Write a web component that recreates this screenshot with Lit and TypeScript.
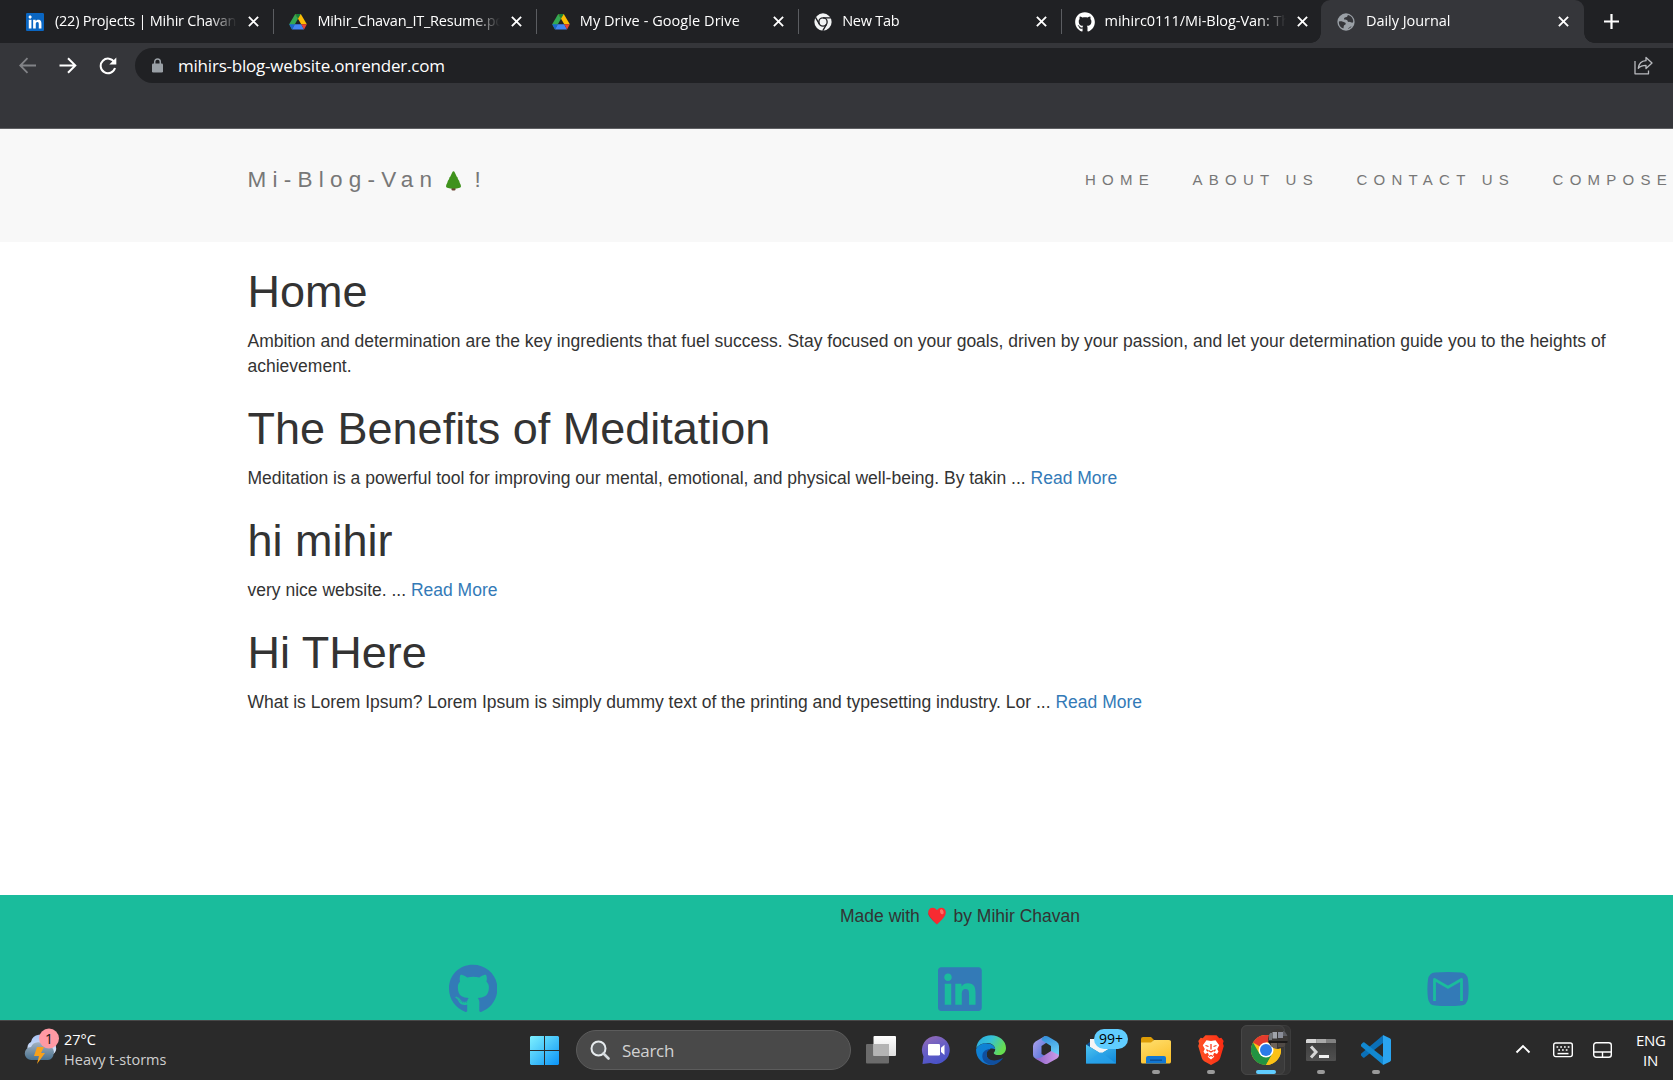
import { LitElement, html, css, TemplateResult } from "lit";
import { customElement } from "lit/decorators.js";
import { classMap } from "lit/directives/class-map.js";

interface Tab { title: string; icon: TemplateResult; active?: boolean; last?: boolean; cls: string; }
interface Post { title: string; body: string; more: boolean; cls: string; }
interface Task { icon: TemplateResult; state: "none" | "open" | "active"; }

const GITHUB_FA = "M165.9 397.4c0 2-2.3 3.6-5.2 3.6-3.3.3-5.6-1.3-5.6-3.6 0-2 2.3-3.6 5.2-3.6 3-.3 5.6 1.3 5.6 3.6zm-31.1-4.5c-.7 2 1.3 4.3 4.3 4.9 2.6 1 5.6 0 6.2-2s-1.3-4.3-4.3-5.2c-2.6-.7-5.5.3-6.2 2.3zm44.2-1.7c-2.9.7-4.9 2.6-4.6 4.9.3 2 2.9 3.3 5.9 2.6 2.9-.7 4.9-2.6 4.6-4.6-.3-1.9-3-3.2-5.9-2.9zM244.8 8C106.1 8 0 113.3 0 252c0 110.9 69.8 205.8 169.5 239.2 12.8 2.3 17.3-5.6 17.3-12.1 0-6.2-.3-40.4-.3-61.4 0 0-70 15-84.7-29.8 0 0-11.4-29.1-27.8-36.6 0 0-22.9-15.7 1.6-15.4 0 0 24.9 2 38.6 25.8 21.9 38.6 58.6 27.5 72.9 20.9 2.3-16 8.8-27.1 16-33.7-55.9-6.2-112.3-14.3-112.3-110.5 0-27.5 7.6-41.3 23.6-58.9-2.6-6.5-11.1-33.3 2.6-67.9 20.9-6.5 69 27 69 27 20-5.6 41.5-8.5 62.8-8.5s42.8 2.9 62.8 8.5c0 0 48.1-33.6 69-27 13.7 34.7 5.2 61.4 2.6 67.9 16 17.7 25.8 31.5 25.8 58.9 0 96.5-58.9 104.2-114.8 110.5 9.2 7.9 17 22.9 17 46.4 0 33.7-.3 75.4-.3 83.6 0 6.5 4.6 14.4 17.3 12.1C428.2 457.8 496 362.9 496 252 496 113.3 383.5 8 244.8 8zM97.2 352.9c-1.3 1-1 3.3.7 5.2 1.6 1.6 3.9 2.3 5.2 1 1.3-1 1-3.3-.7-5.2-1.6-1.6-3.9-2.3-5.2-1zm-10.8-8.1c-.7 1.3.3 2.9 2.3 3.9 1.6 1 3.6.7 4.3-.7.7-1.3-.3-2.9-2.3-3.9-2-.6-3.6-.3-4.3.7zm32.4 35.6c-1.6 1.3-1 4.3 1.3 6.2 2.3 2.3 5.2 2.6 6.5 1 1.3-1.3.7-4.3-1.3-6.2-2.2-2.3-5.2-2.6-6.5-1zm-11.4-14.7c-1.6 1-1.6 3.6 0 5.9 1.6 2.3 4.3 3.3 5.6 2.3 1.6-1.3 1.6-3.9 0-6.2-1.4-2.3-4-3.3-5.6-2z";
const LINKEDIN_FA = "M416 32H31.9C14.3 32 0 46.5 0 64.3v383.4C0 465.5 14.3 480 31.9 480H416c17.6 0 32-14.5 32-32.3V64.3c0-17.8-14.4-32.3-32-32.3zM135.4 416H69V202.2h66.5V416zm-33.2-243c-21.3 0-38.5-17.3-38.5-38.5S80.9 96 102.2 96c21.2 0 38.5 17.3 38.5 38.5 0 21.3-17.2 38.5-38.5 38.5zm282.1 243h-66.4V312c0-24.8-.5-56.7-34.5-56.7-34.6 0-39.9 27-39.9 54.9V416h-66.4V202.2h63.7v29.2h.9c8.9-16.8 30.6-34.5 62.9-34.5 67.2 0 79.7 44.3 79.7 101.9V416z";

const linkedinFav = html`<svg class="fav" viewBox="0 32 448 448"><rect x="20" y="52" width="400" height="400" fill="#fff"/><path fill="#0a66c2" d=${LINKEDIN_FA}/></svg>`;
const driveFav = html`<svg class="fav" viewBox="0 0 20 20">
  <path d="M6.9 1 10 6.4 3.3 18 .2 12.6z" fill="#34a853"/>
  <path d="M13.1 1 19.8 12.6h-6.2L7 1z" fill="#fbbc04"/>
  <path d="M6.9 1h6.2L10 6.4z" fill="#188038"/>
  <path d="M6.4 12.6h7.2l3.1 5.7H3.3z" fill="#4285f4"/>
  <path d="M.2 12.6h6.2l-3.1 5.7z" fill="#1967d2"/>
  <path d="M13.6 12.6h6.2l-3.1 5.7z" fill="#ea4335"/></svg>`;
const chromeFav = html`<svg class="fav" viewBox="0 0 20 20"><circle cx="10" cy="10" r="9.6" fill="#f1f3f4"/>
  <circle cx="10" cy="10" r="4.6" fill="none" stroke="#202124" stroke-width="1.5"/>
  <path d="M10 5.4h8.7M6 12.3 1.7 4.8M14 12.3 9.7 19.8" stroke="#202124" stroke-width="1.5"/></svg>`;
const githubFav = html`<svg class="fav big" viewBox="0 0 496 504"><path fill="#fff" d=${GITHUB_FA}/></svg>`;
const globeFav = html`<svg class="fav" viewBox="0 0 20 20"><circle cx="10" cy="10" r="9.6" fill="#9aa0a6"/>
  <path d="M12.3 2.2c-1 .8-.6 1.9-1.7 2.3-1.3.5-2.600.5-2.800 1.700-.1 1 .9 1.200 2.200 1.200 1.500 0 1.700.8 1.800 1.800.2 1.300 2.500.6 3.700 1.200 1 .5 2 .5 2.500-.3a8 8 0 0 0-5.700-7.900zM2 9.600c1.500-.6 3.300-.3 4.500.1 1.600.6 3 .6 3.200 2 .1 1.200-1.200 1.500-1.900 2.200-.6.7 0 2-.8 3.300A8 8 0 0 1 2 9.600zM12 17.800c.2-1.200 1.600-1.200 2.100-2 .4-.7 1.100-1 2.200-.8a8 8 0 0 1-4.300 2.800z" fill="#35363a"/></svg>`;

const closeX = html`<svg class="close" viewBox="0 0 10 10"><path d="M.8.8l8.400 8.400M9.200.8.8 9.200" stroke="#fff" stroke-width="1.700"/></svg>`;

const TABS: Tab[] = [
  { title: "(22) Projects | Mihir Chavan", icon: linkedinFav, cls: "t1" },
  { title: "Mihir_Chavan_IT_Resume.pd", icon: driveFav, cls: "t2" },
  { title: "My Drive - Google Drive", icon: driveFav, cls: "t3" },
  { title: "New Tab", icon: chromeFav, cls: "t4" },
  { title: "mihirc0111/Mi-Blog-Van: Th", icon: githubFav, last: true, cls: "t5" },
  { title: "Daily Journal", icon: globeFav, active: true, cls: "t6" },
];

const POSTS: Post[] = [
  { title: "Home", body: "Ambition and determination are the key ingredients that fuel success. Stay focused on your goals, driven by your passion, and let your determination guide you to the heights of achievement.", more: false, cls: "p1" },
  { title: "The Benefits of Meditation", body: "Meditation is a powerful tool for improving our mental, emotional, and physical well-being. By takin ...", more: true, cls: "p2" },
  { title: "hi mihir", body: "very nice website. ...", more: true, cls: "p3" },
  { title: "Hi THere", body: "What is Lorem Ipsum? Lorem Ipsum is simply dummy text of the printing and typesetting industry. Lor ...", more: true, cls: "p4" },
];

const TASKS: Task[] = [
  { state: "none", icon: html`<svg class="app" viewBox="0 0 30 30"><defs><linearGradient id="tv" x2="0" y2="1"><stop stop-color="#fff"/><stop offset="1" stop-color="#dedede"/></linearGradient></defs><rect x="0" y="9" width="23" height="19.500" rx="1" fill="#6b6b6b"/><rect x="7.500" y="1" width="22.500" height="20" rx="1" fill="url(#tv)"/><rect x="7.500" y="9" width="15.500" height="12" fill="#b4b4b4"/></svg>` },
  { state: "none", icon: html`<svg class="app" viewBox="0 0 30 30"><defs><linearGradient id="ch" x2=".4" y2="1"><stop stop-color="#9a6cb5"/><stop offset=".5" stop-color="#6a5fc4"/><stop offset="1" stop-color="#4b53c8"/></linearGradient></defs><path d="M15 1a14 14 0 1 1-5.500 27L1.500 29l1-7.500A14 14 0 0 1 15 1z" fill="url(#ch)"/><rect x="7" y="9" width="12" height="11.500" rx="1.200" fill="#fff"/><path d="M20 12.800 23.500 9.700v10.300L20 17z" fill="#fff"/></svg>` },
  { state: "none", icon: html`<svg class="app" viewBox="0 0 30 30"><defs><linearGradient id="e1" x2="1" y2=".4"><stop stop-color="#28a8e0"/><stop offset=".5" stop-color="#35c1d8"/><stop offset="1" stop-color="#66dd50"/></linearGradient><linearGradient id="e2" x2=".5" y2="1"><stop stop-color="#0d86d6"/><stop offset="1" stop-color="#1376d0"/></linearGradient></defs><path d="M.2 13.500C1 5.500 7 .2 15 .2c8.500 0 15 5.800 15 12.700 0 4.400-3.300 7.200-7.300 7.200-3 0-5-1-5-2.100 0-.9 1.500-1.300 1.500-3.600C19.200 11 16 8 11.500 8 5.500 8 1.500 11 .2 13.500z" fill="url(#e1)"/><path d="M.1 14.200C1.500 10.700 5.500 8.200 10.200 8.200c5 0 8.800 2.800 9 6-5-2.200-8.700 1-8.700 4.800 0 5.800 6.500 9.500 12.500 7-2.300 2.500-5 3.900-8.500 3.900C6 29.900-.4 22.500.1 14.200z" fill="url(#e2)"/><path d="M14.500 14c-3 1.500-4 3.500-4 5.500 0 5.500 8 8.500 16.500 3.200-2.500 4.600-7 7.200-12 7.200-6.500-1.500-9.500-6-8.500-10.500.7-3 4-5.600 8-5.400z" fill="#104f9e"/></svg>` },
  { state: "none", icon: html`<svg class="app" viewBox="0 0 30 30"><defs><linearGradient id="m1" x2="1" y2="1"><stop stop-color="#b8a5ee"/><stop offset="1" stop-color="#3e6bd6"/></linearGradient><linearGradient id="m2" x2=".3" y2="1"><stop stop-color="#2f8bd8"/><stop offset="1" stop-color="#68c9f5"/></linearGradient><linearGradient id="m3" x2="1"><stop stop-color="#8b62c8"/><stop offset="1" stop-color="#d09be8"/></linearGradient></defs><path d="M14 1 4.500 6.500Q2 8 2 11v9q0 2.500 2.500 3.500l4.500 2 5-4.500-3.500-2V11l6-4V2z" fill="url(#m1)"/><path d="M13 1.500q2-1.200 4 0l8.500 5Q28 8 28 11v9.500l-8-1.500v-8L10.500 5q0-2 2.500-3.500z" fill="url(#m2)"/><path d="M28 20q0 2-2 3.500l-9 5q-2 1-4 0L4 23.500q6 0 9-3l7-4.500z" fill="url(#m3)"/></svg>` },
  { state: "none", icon: html`<svg class="app" viewBox="0 0 30 30"><defs><linearGradient id="ml" x2=".8" y2="1"><stop stop-color="#4ec5f2"/><stop offset="1" stop-color="#138bdc"/></linearGradient></defs><path d="M0 10 10 2h10l10 8-15 10z" fill="#0f4f90"/><path d="M4 4h22v8l-11 7L4 12z" fill="#f5f5f5"/><path d="M0 9.500 15 18.500 30 9.500V28.500H0z" fill="url(#ml)"/><path d="M0 28.500 15 17 30 28.500z" fill="#2aa3ea" opacity=".7"/></svg><span class="count">99+</span>` },
  { state: "open", icon: html`<svg class="app" viewBox="0 0 30 30"><defs><linearGradient id="fd" x2=".5" y2="1"><stop stop-color="#ffdf70"/><stop offset="1" stop-color="#fcc22e"/></linearGradient></defs><path d="M0 4q0-2 2-2h8l3 3-3 4H0z" fill="#dd9c06"/><path d="M0 7.500h10l3-2.500h15q2 0 2 1.500v20q0 2-1.500 2H1.500Q0 28.500 0 27z" fill="url(#fd)"/><path d="M5 28.500V23q0-2 2-2h16q2 0 2 2v5.500z" fill="#1277d2"/><rect x="9" y="24.500" width="12" height="1.300" fill="#0b4c92"/></svg>` },
  { state: "open", icon: html`<svg class="app" viewBox="0 0 30 30"><defs><linearGradient id="bv" x2="1"><stop stop-color="#ff5226"/><stop offset="1" stop-color="#fb2b12"/></linearGradient></defs><path d="M9.500.2h11l2.800 3 2-.4 2.400 3.200-.8 2.500.9 2.500-3.600 12q-.6 2-2.400 3.200L15 30l-6.800-3.800q-1.800-1.200-2.400-3.200L2.200 11l.9-2.500-.8-2.500 2.400-3.200 2 .4z" fill="url(#bv)"/><path d="M10.500 5.300 15 6l4.500-.7 3.700 5-2 3.700 1.300 2.500-1.500 2.500-2.800-1.300-1.200 2.500 1.300 1.500L15 24.500l-3.300-2.800 1.300-1.500-1.200-2.500L9 19l-1.500-2.500L8.800 14l-2-3.700z" fill="#fff"/><path d="M9.500 10.500l3 1M20.500 10.500l-3 1M15 9v5.500M12.500 15.500 15 17l2.500-1.500M10.500 14.500l1.500 1.800M19.500 14.500 18 16.300M13 21.500l2-1 2 1" stroke="#fc3c1c" stroke-width="1.300" fill="none"/></svg>` },
  { state: "active", icon: html`<svg class="app" viewBox="0 0 30 30"><circle cx="15" cy="15" r="15" fill="#fbc116"/><path d="M15 15 2 7.500A15 15 0 0 1 28 7.500H15z" fill="#e33b2e"/><path d="M2 7.500A15 15 0 0 0 15 30l6.500-11.300H8.500z" fill="#229342"/><path d="M21.500 18.700 15 30A15 15 0 0 0 28 7.500H15z" fill="#fbc116"/><circle cx="15" cy="15" r="7.500" fill="#fff"/><circle cx="15" cy="15" r="6" fill="#2a7be9"/></svg>
    <svg class="avatar" viewBox="0 0 20 20"><defs><clipPath id="av"><circle cx="10" cy="10" r="10"/></clipPath></defs><g clip-path="url(#av)"><rect width="20" height="20" fill="#3b3836"/><rect x="1" y="4" width="3" height="7" fill="#74777b"/><rect x="4.500" y="3" width="4.500" height="6.500" fill="#a1a4aa"/><rect x="10" y="3" width="5" height="6" fill="#8a8d98"/><rect x="15" y="2" width="5" height="5" fill="#5b5c61"/><path d="M0 12h20v2H0z" fill="#1c1a1a"/><path d="M3 14h6v6H3z" fill="#6d6259"/><path d="M10 14h7v4h-7z" fill="#504a46"/></g></svg>` },
  { state: "open", icon: html`<svg class="app" viewBox="0 0 30 30"><defs><linearGradient id="tm" x2="0" y2="1"><stop stop-color="#3b3b3b"/><stop offset="1" stop-color="#505050"/></linearGradient></defs><rect y="4" width="30" height="22" rx="1" fill="url(#tm)"/><path d="M1 4h9.500v4H0V5z" fill="#d5d5d5"/><rect x="10.500" y="4" width="9.500" height="4" fill="#a9a9a9"/><path d="M20 4h9l1 1v3H20z" fill="#818181"/><path d="M5 11.500 10 17l-5 5.500" fill="none" stroke="#d6d6d6" stroke-width="3"/><rect x="13" y="20" width="10" height="3" fill="#f2f2f2"/></svg>` },
  { state: "open", icon: html`<svg class="app" viewBox="0 0 30 30"><path d="M0 18.800 22 .2V8L3.500 22.500Q2.700 23 2 22.400L.3 20.800Q-.5 19.800 0 18.800z" fill="#0b70b8"/><path d="M0 11.200 22 29.800V22L3.500 7.500Q2.700 7 2 7.600L.3 9.200Q-.5 10.200 0 11.200z" fill="#1288d0"/><path d="M22 .1 28.800 3.200Q30 3.800 30 5v20q0 1.200-1.200 1.800L22 29.900Z" fill="#2aa4f0"/></svg>` },
];

@customElement("app-root")
export class AppRoot extends LitElement {
  static styles = css`
    :host { display: block; width: 1673px; height: 1080px; overflow: hidden; background: #fff; }
    * { box-sizing: border-box; }
    svg { display: block; flex: none; }
    .screen { display: flex; flex-direction: column; width: 1673px; height: 1080px; overflow: hidden; }
    .ui { font-family: "Open Sans", "Noto Sans", sans-serif; }

    .tabs { display: flex; height: 43px; flex: none; background: #202124; padding-left: 11px; color: #fff; }
    .tab { display: flex; align-items: center; width: 262.400px; flex: none; height: 43px; padding-left: 16px; }
    .tab.t1, .tab.t5 { padding-left: 15px; }
    .tab .fav { width: 18px; height: 18px; margin-right: 11px; }
    .tab.t2 .fav, .tab.t3 .fav, .tab.t4 .fav { margin-right: 10px; }
    .tab .fav.big { width: 20px; height: 20px; margin-right: 10px; margin-left: -1px; }
    .label { flex: 1; min-width: 0; height: 24px; line-height: 22px; font-size: 14.500px; white-space: nowrap; overflow: hidden; letter-spacing: -0.240px;
      -webkit-mask-image: linear-gradient(90deg, #000 85%, transparent 100%); mask-image: linear-gradient(90deg, #000 85%, transparent 100%); }
    .t3 .label { letter-spacing: 0.060px; }
    .t5 .label, .t6 .label { flex: none; width: 181px; letter-spacing: -0.040px; }
    .close { width: 11px; height: 11px; margin-left: 11px; }
    .sep { width: 1px; height: 25px; background: #5b5d61; margin: 0 -1px 0 14px; flex: none; }
    .tab.active { background: #35363a; border-radius: 9px 9px 0 0; margin-left: -2px; width: 263.500px; position: relative; }
    .tab.active::before, .tab.active::after { content: ""; position: absolute; bottom: 0; width: 10px; height: 10px; }
    .tab.active::before { left: -10px; background: radial-gradient(circle at 0 0, transparent 9.500px, #35363a 10px); }
    .tab.active::after { right: -10px; background: radial-gradient(circle at 100% 0, transparent 9.500px, #35363a 10px); }
    .plus { width: 15px; height: 15px; margin: 14px 0 0 20px; }

    .toolbar { display: flex; align-items: flex-start; height: 86px; flex: none; background: #35363a; border-bottom: 1px solid #5f6063; padding: 5px 0 0 19px; }
    .nav { width: 18px; height: 18px; margin: 9px 22px 0 0; }
    .omni { display: flex; align-items: center; height: 35px; flex: 1; background: #202124; border-radius: 18px 0 0 18px; padding: 0 20px 0 17px; margin-left: -4px; color: #fff; }
    .url { flex: 1; font-size: 17px; margin-left: 15px; line-height: 35px; white-space: nowrap; letter-spacing: -0.210px; }

    .page { height: 891px; flex: none; background: #fff; display: flex; flex-direction: column; color: #333;
      font: 17.500px/25px "Liberation Sans", Arial, sans-serif; overflow: hidden; }
    .navbar { display: flex; justify-content: space-between; height: 113px; flex: none; width: 1673px; background: #f8f8f8; padding: 38px 0 0 247.500px; color: #777; }
    .brand { display: flex; font-size: 22.500px; letter-spacing: 6.250px; white-space: pre; }
    .tree { width: 15px; height: 20px; margin: 4px 13px 0 8px; }
    .links { display: flex; gap: 37.500px; font-size: 15px; letter-spacing: 6.250px; white-space: nowrap; }
    .content { width: 1425px; flex: none; margin-left: 247.500px; }
    h1 { font-size: 45px; line-height: 49.500px; margin: 25px 0 12.500px; font-weight: 400; }
    p { margin: 0 0 12.500px; }
    a { color: #337ab7; text-decoration: none; }
    .footer { margin-top: auto; height: 125px; flex: none; background: #1abc9c; padding-top: 9px; }
    .made { width: 1462.500px; margin-left: 228.750px; display: flex; justify-content: center; white-space: pre; }
    .heart { width: 18px; height: 18px; margin: 3px 3px 0; }
    .social { display: grid; grid-template-columns: repeat(3, 487.500px); margin: 35px 0 0 229px; justify-items: center; }
    .gh { width: 48.400px; height: 50px; margin-left: 1px; }
    .li { width: 43.750px; height: 50px; }
    .gm { width: 42px; height: 34px; margin-top: 8px; }

    .taskbar { display: flex; height: 60px; flex: none; background: #2a2a2a; border-top: 1px solid #484848; color: #fff; align-items: flex-start; }
    .weather { display: flex; width: 530px; flex: none; padding: 6.500px 0 0 24px; }
    .cloud { width: 36px; height: 36px; }
    .wx { margin-left: 4px; font-size: 14.500px; line-height: 20px; letter-spacing: -0.050px; margin-top: 2.500px; white-space: nowrap; }
    .wx .sub { color: #cfcfcf; letter-spacing: 0.030px; }
    .win { width: 29px; height: 29px; margin-top: 15px; }
    .search { display: flex; align-items: center; width: 275px; height: 40px; margin: 9px 0 0 17px; flex: none; border-radius: 20px; background: #494949; border: 1px solid #5c5c5c; padding-left: 13px; }
    .search span { font-size: 17px; color: #d2d2d2; margin-left: 12px; letter-spacing: -0.300px; }
    .mag { width: 20px; height: 20px; }
    .apps { display: flex; margin-left: 2.500px; }
    .cell { position: relative; width: 55px; height: 59px; flex: none; display: flex; justify-content: center; padding-top: 14px; }
    .app { width: 30px; height: 30px; position: relative; }
    .ind { position: absolute; top: 49px; left: 23.500px; width: 8px; height: 4px; border-radius: 2px; background: #9a9a9a; }
    .cell.active .ind { left: 17.500px; width: 20px; background: #60cdff; }
    .tile { position: absolute; left: 2.500px; top: 4px; width: 44px; height: 50px; border-radius: 6px; background: #3a3a3a; border: 1px solid #464646; }
    .tile.back { width: 50px; background: #333; border-color: #3c3c3c; }
    .avatar { position: absolute; left: 29px; top: 8px; width: 20px; height: 20px; }
    .count { position: absolute; left: 20.500px; top: 8px; width: 34px; height: 20px; border-radius: 10px; background: #60cdff; color: #000; font-size: 14px; line-height: 20px; text-align: center; }
    .tray { display: flex; flex: 1; padding-right: 8px; justify-content: flex-end; }
    .lang { font-size: 15px; line-height: 20px; text-align: center; margin: 8.500px 0 0 24px; letter-spacing: -0.300px; width: 29px; }
    .chev { width: 16px; height: 12px; margin: 22px 22px 0 0; }
    .kb { width: 20px; height: 16px; margin: 21px 20px 0 0; }
    .tp { width: 19px; height: 16px; margin: 21px 0 0; }
  `;

  private tab(t: Tab) {
    return html`<div class=${classMap({ tab: true, active: !!t.active, [t.cls]: true })}>
      ${t.icon}<span class="label">${t.title}</span>${closeX}${t.active || t.last ? "" : html`<i class="sep"></i>`}</div>`;
  }

  private post(p: Post) {
    return html`<h1>${p.title}</h1><p class=${p.cls}>${p.body}${p.more ? html` <a>Read More</a>` : ""}</p>`;
  }

  private task(t: Task) {
    return html`<div class=${classMap({ cell: true, active: t.state === "active" })}>
      ${t.state === "active" ? html`<i class="tile back"></i><i class="tile"></i>` : ""}
      ${t.icon}${t.state === "none" ? "" : html`<i class="ind"></i>`}</div>`;
  }

  render() {
    return html`<div class="screen">
      <div class="tabs ui">${TABS.map((t) => this.tab(t))}
        <svg class="plus" viewBox="0 0 15 15"><path d="M7.500 0v15M0 7.500h15" stroke="#fff" stroke-width="2.200"/></svg></div>
      <div class="toolbar ui">
        <svg class="nav" viewBox="0 0 18 18"><path d="M17 8.500H1.500M8.500 1.200 1.200 8.500l7.300 7.300" fill="none" stroke="#828387" stroke-width="1.800"/></svg>
        <svg class="nav" viewBox="0 0 18 18"><path d="M.5 8.500H16M9 1.200l7.300 7.300L9 15.800" fill="none" stroke="#fff" stroke-width="2"/></svg>
        <svg class="nav" viewBox="0 0 18 18"><path d="M15.300 5.200A7.300 7.300 0 1 0 16 11" fill="none" stroke="#fff" stroke-width="2"/><path d="M17.300.6v7h-7z" fill="#fff"/></svg>
        <div class="omni">
          <svg width="11" height="15" viewBox="0 0 11 15"><rect y="5.500" width="11" height="9" rx="1.300" fill="#9aa0a6"/><path d="M2.700 6V3.700a2.800 2.800 0 0 1 5.600 0V6" fill="none" stroke="#9aa0a6" stroke-width="1.500"/></svg>
          <span class="url">mihirs-blog-website.onrender.com</span>
          <svg width="19" height="19" viewBox="0 0 19 19"><path d="M1 5v12.800h13.500V14.500M4.300 12.300C4.800 7.500 7.500 5 12 4.700V1.500L18 7l-6 5.500V9.300c-3.500 0-5.800.8-7.700 3z" fill="none" stroke="#b9bbbf" stroke-width="1.300" stroke-linejoin="round"/></svg>
        </div>
      </div>
      <div class="page">
        <nav class="navbar">
          <div class="brand"><span>Mi-Blog-Van</span><svg class="tree" viewBox="0 0 15 20"><path d="M5.500 16h4v3q-2 1.200-4 0z" fill="#6d4534"/><path d="M7.500.2q.7 0 1.300 1.300l2 4.300q1.500 1.200 1 2 2 2.700 2 4.300 1.200 2 1.200 3.300-.4 2.100-7.500 2.100T0 15.400q0-1.300 1.200-3.300 0-1.600 2-4.300-.5-.8 1-2l2-4.300Q6.800.2 7.500.2z" fill="#3f921c"/></svg><span>!</span></div>
          <div class="links"><span>HOME</span><span>ABOUT US</span><span>CONTACT US</span><span>COMPOSE</span></div>
        </nav>
        <main class="content">${POSTS.map((p) => this.post(p))}</main>
        <footer class="footer">
          <div class="made"><span>Made with </span><svg class="heart" viewBox="0 0 18 18"><path d="M9 17.500C5 13.500.2 9.800.2 5.300.2 2.500 2.200.7 4.700.7 6.600.7 8 1.700 9 3.200 10 1.700 11.400.7 13.300.7c2.500 0 4.500 1.800 4.500 4.600 0 4.500-4.800 8.200-8.800 12.200z" fill="#f72b31"/><path d="M2 9.500c2 3 4.500 5 7 8C5 13.500.2 9.800.2 5.300z" fill="#c9163a"/><ellipse cx="13.800" cy="4.800" rx="1.700" ry="2.600" fill="#ff6f66" transform="rotate(-20 13.800 4.800)"/></svg><span> by Mihir Chavan</span></div>
          <div class="social">
            <svg class="gh" viewBox="0 0 496 512"><path fill="#337ab7" d=${GITHUB_FA}/></svg>
            <svg class="li" viewBox="0 0 448 512"><path fill="#337ab7" d=${LINKEDIN_FA}/></svg>
            <svg class="gm" viewBox="0 0 42 34"><path d="M8 .6Q21-.5 34 .6q6 .4 7 7 1.200 9.400 0 18.800-1 6.600-7 7-13 1.100-26 0-6-.4-7-7-1.200-9.400 0-18.800 1-6.600 7-7z" fill="#337ab7"/><path d="M7.500 29V7.500L21 15.300 34.500 7.500V29" fill="none" stroke="#1abc9c" stroke-width="2.800" stroke-linejoin="round"/></svg>
          </div>
        </footer>
      </div>
      <div class="taskbar ui">
        <div class="weather">
          <svg class="cloud" viewBox="0 0 36 36"><defs><linearGradient id="c1" x2="0" y2="1"><stop stop-color="#a9c4f5"/><stop offset="1" stop-color="#dfe9f8"/></linearGradient><linearGradient id="c2" x2="0" y2="1"><stop stop-color="#a3b1bf"/><stop offset="1" stop-color="#48718f"/></linearGradient></defs>
            <path d="M4 22a6 6 0 0 1 3-8A9 9 0 0 1 24 12a8 8 0 0 1 4 15H9z" fill="url(#c1)"/>
            <path d="M7.500 32a6.500 6.500 0 0 1-.5-13 8 8 0 0 1 14-1 7 7 0 0 1 9 6q-1 8-6 8z" fill="url(#c2)"/>
            <path d="M13 19h7l-3 6h4l-8 11 2-8h-5z" fill="#f7a11b"/>
            <circle cx="25" cy="10.500" r="10" fill="#ff99a4"/><text x="25" y="15.500" font-size="14" fill="#111" text-anchor="middle">1</text></svg>
          <div class="wx"><div>27°C</div><div class="sub">Heavy t-storms</div></div>
        </div>
        <svg class="win" viewBox="0 0 29 29"><defs><linearGradient id="w" gradientUnits="userSpaceOnUse" x1="0" y1="0" x2="29" y2="29"><stop stop-color="#7df0ff"/><stop offset=".45" stop-color="#4cc8fa"/><stop offset="1" stop-color="#0a93f7"/></linearGradient></defs><path d="M1 0h13v14H0V1zM15 0h13l1 1v13H15zM0 15h14v14H1l-1-1zM15 15h14v13l-1 1H15z" fill="url(#w)"/></svg>
        <div class="search"><svg class="mag" viewBox="0 0 20 20"><circle cx="8.500" cy="8.500" r="7" fill="#5f6264" stroke="#e6ebee" stroke-width="2"/><path d="M13.500 13.500 18.500 18.500" stroke="#d5dade" stroke-width="2.600" stroke-linecap="round"/></svg><span>Search</span></div>
        <div class="apps">${TASKS.map((t) => this.task(t))}</div>
        <div class="tray">
          <svg class="chev" viewBox="0 0 16 12"><path d="M1.500 9.500 8 3l6.500 6.500" fill="none" stroke="#fff" stroke-width="1.900"/></svg>
          <svg class="kb" viewBox="0 0 20 16"><rect x=".7" y="1" width="18.600" height="13.600" rx="2" fill="none" stroke="#fff" stroke-width="1.400"/><path d="M3.500 5h13" stroke="#fff" stroke-width="1.700" stroke-dasharray="1.700 2.050"/><path d="M5.300 8h10" stroke="#fff" stroke-width="1.700" stroke-dasharray="1.700 2.050"/><path d="M4.500 11.600h11" stroke="#fff" stroke-width="1.500"/></svg>
          <svg class="tp" viewBox="0 0 19 16"><rect x=".7" y=".7" width="17.600" height="14.600" rx="2.500" fill="none" stroke="#fff" stroke-width="1.400"/><path d="M.7 10h17.600M9.500 10v5" stroke="#fff" stroke-width="1.400"/></svg>
          <div class="lang">ENG<br/>IN</div>
        </div>
      </div>
    </div>`;
  }
}
